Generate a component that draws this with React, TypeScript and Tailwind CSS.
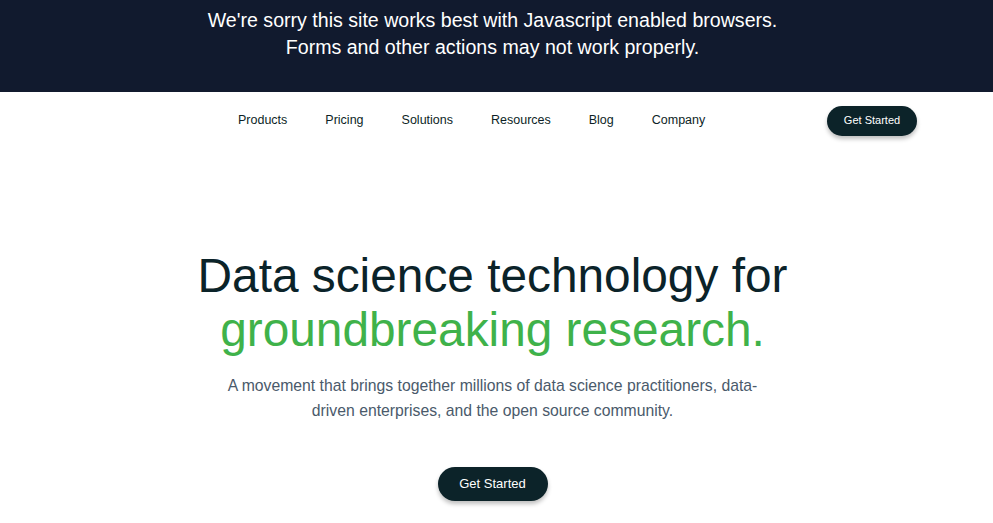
import React from 'react';

const links = ['Products', 'Pricing', 'Solutions', 'Resources', 'Blog', 'Company'];

const App = () => {
  return (
    <div className="min-h-screen bg-white font-['Liberation_Sans',Arial,sans-serif]">
      <div className="h-[92px] bg-[#111a2e] pr-[8px] pt-[7px] text-center text-[19.6px] leading-[27px] text-white">
        <p>We're sorry this site works best with Javascript enabled browsers.</p>
        <p>Forms and other actions may not work properly.</p>
      </div>

      <header className="flex h-[56px] w-[985px] items-center pl-[238px] pr-[68px] pt-[1px]">
        <nav className="flex items-center gap-[38px] text-[12.5px] text-[#0d1f26]">
          {links.map((l) => (
            <a key={l} href="#" className="hover:text-[#3fb24a]">
              {l}
            </a>
          ))}
        </nav>
        <a
          href="#"
          className="ml-auto flex h-[30px] w-[90px] items-center justify-center rounded-full bg-[#0c2329] text-[11px] text-white shadow-[0_3px_4px_rgba(0,0,0,0.25)]"
        >
          Get Started
        </a>
      </header>

      <main className="flex flex-col items-center pr-[8px] pt-[101px] text-center">
        <h1 className="text-[47.8px] leading-[54px] text-[#0b2329]">
          Data science technology for
          <br />
          <span className="text-[#3fb24a]">groundbreaking research.</span>
        </h1>
        <p className="mt-[16px] w-[540px] text-[15.75px] leading-[25px] text-[#4a5a6b]">
          A movement that brings together millions of data science practitioners, data-driven
          enterprises, and the open source community.
        </p>
        <a
          href="#"
          className="mt-[44px] flex h-[34px] w-[110px] items-center justify-center rounded-full bg-[#0c2329] text-[13px] text-white shadow-[0_3px_4px_rgba(0,0,0,0.25)]"
        >
          Get Started
        </a>
      </main>
    </div>
  );
};

export default App;
